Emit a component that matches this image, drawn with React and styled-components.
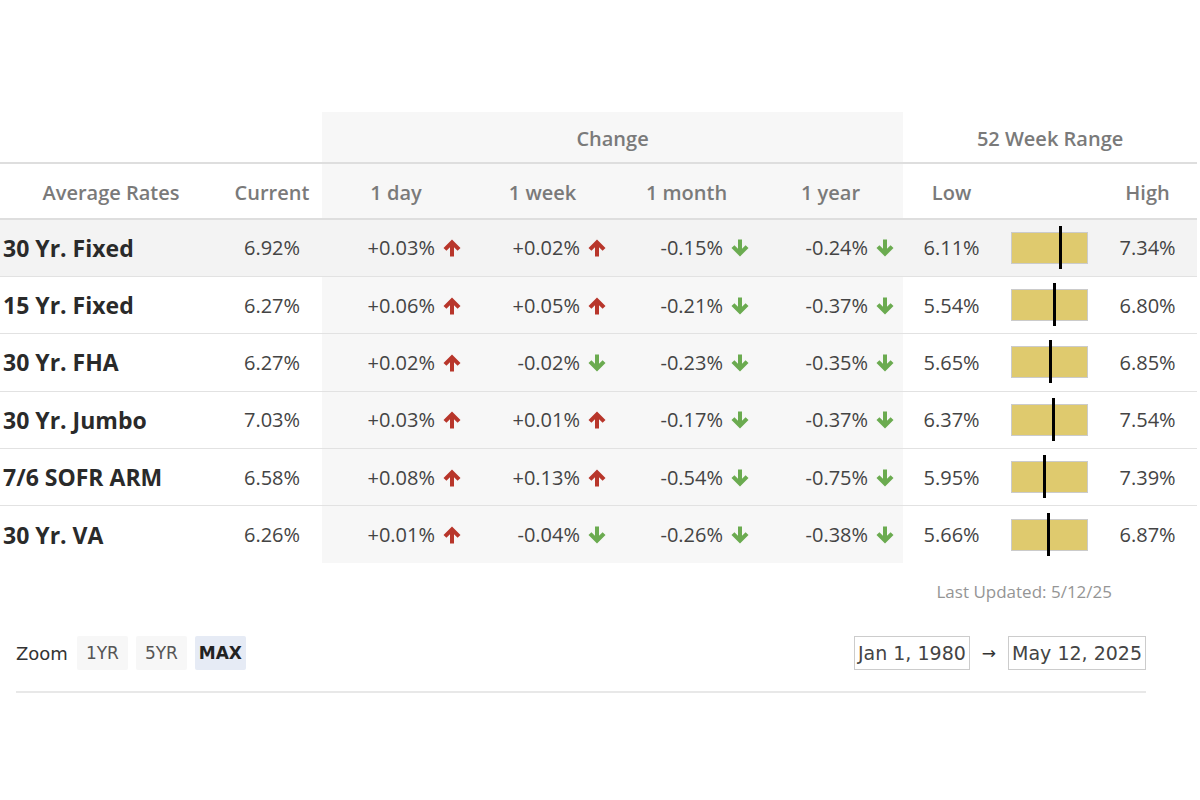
import React from 'react';
import styled, { createGlobalStyle } from 'styled-components';

const rates = [
  { name: '30 Yr. Fixed', current: 6.92, changes: [0.03, 0.02, -0.15, -0.24], low: 6.11, high: 7.34 },
  { name: '15 Yr. Fixed', current: 6.27, changes: [0.06, 0.05, -0.21, -0.37], low: 5.54, high: 6.8 },
  { name: '30 Yr. FHA', current: 6.27, changes: [0.02, -0.02, -0.23, -0.35], low: 5.65, high: 6.85 },
  { name: '30 Yr. Jumbo', current: 7.03, changes: [0.03, 0.01, -0.17, -0.37], low: 6.37, high: 7.54 },
  { name: '7/6 SOFR ARM', current: 6.58, changes: [0.08, 0.13, -0.54, -0.75], low: 5.95, high: 7.39 },
  { name: '30 Yr. VA', current: 6.26, changes: [0.01, -0.04, -0.26, -0.38], low: 5.66, high: 6.87 },
];

const periods = ['1 day', '1 week', '1 month', '1 year'];

const pct = (v) => `${v.toFixed(2)}%`;
const signed = (v) => `${v > 0 ? '+' : '-'}${Math.abs(v).toFixed(2)}%`;

const Arrow = ({ up }) => (
  <ArrowSvg viewBox="0 0 20 20" $up={up}>
    <path
      d="M10 1.5 L18.5 10 L15.6 12.8 L12 9.2 L12 18.5 L8 18.5 L8 9.2 L4.4 12.8 L1.5 10 Z"
      fill="currentColor"
    />
  </ArrowSvg>
);

const RangeBar = ({ low, high, current }) => {
  const pos = ((current - low) / (high - low)) * 100;
  return (
    <Bar>
      <Marker style={{ left: `${pos}%` }} />
    </Bar>
  );
};

const App = () => (
  <>
    <GlobalStyle />
    <Page>
      <Table>
        <colgroup>
          <col style={{ width: 222 }} />
          <col style={{ width: 100 }} />
          <col style={{ width: 148 }} />
          <col style={{ width: 145 }} />
          <col style={{ width: 143 }} />
          <col style={{ width: 145 }} />
          <col style={{ width: 97 }} />
          <col style={{ width: 98 }} />
          <col style={{ width: 99 }} />
        </colgroup>
        <thead>
          <GroupRow>
            <GroupCell colSpan={2} />
            <GroupCell colSpan={4} $shade>
              Change
            </GroupCell>
            <GroupCell colSpan={3}>52 Week Range</GroupCell>
          </GroupRow>
          <HeadRow>
            <HeadCell>Average Rates</HeadCell>
            <HeadCell>Current</HeadCell>
            {periods.map((p) => (
              <HeadCell key={p} $shade>
                {p}
              </HeadCell>
            ))}
            <HeadCell>Low</HeadCell>
            <HeadCell />
            <HeadCell>High</HeadCell>
          </HeadRow>
        </thead>
        <tbody>
          {rates.map((r, i) => (
            <Row key={r.name} $active={i === 0}>
              <NameCell>{r.name}</NameCell>
              <Cell>{pct(r.current)}</Cell>
              {r.changes.map((c, j) => (
                <ChangeCell key={j}>
                  {signed(c)}
                  <Arrow up={c > 0} />
                </ChangeCell>
              ))}
              <Cell>{pct(r.low)}</Cell>
              <Cell>
                <RangeBar low={r.low} high={r.high} current={r.current} />
              </Cell>
              <Cell>{pct(r.high)}</Cell>
            </Row>
          ))}
        </tbody>
      </Table>

      <Updated>Last Updated: 5/12/25</Updated>

      <Controls>
        <ZoomGroup>
          <ZoomLabel>Zoom</ZoomLabel>
          <ZoomButton>1YR</ZoomButton>
          <ZoomButton>5YR</ZoomButton>
          <ZoomButton $selected>MAX</ZoomButton>
        </ZoomGroup>
        <DateGroup>
          <DateBox>Jan 1, 1980</DateBox>
          <DateArrow>→</DateArrow>
          <DateBox>May 12, 2025</DateBox>
        </DateGroup>
      </Controls>
    </Page>
  </>
);

export default App;

const GlobalStyle = createGlobalStyle`
  body {
    margin: 0;
    background: #fff;
    font-family: "Open Sans", Lato, sans-serif;
  }
`;

const Page = styled.div`
  width: 1200px;
  padding-top: 112px;
`;

const Table = styled.table`
  width: 1197px;
  border-collapse: collapse;
  table-layout: fixed;
  color: #444;
`;

const GroupRow = styled.tr`
  height: 51px;
  border-bottom: 2px solid #dedede;
`;

const GroupCell = styled.th`
  padding: 3px 0 0;
  font-size: 20px;
  font-weight: 600;
  color: #7a7a7a;
  text-align: center;
  vertical-align: middle;
  background: ${(p) => (p.$shade ? '#f7f7f7' : 'transparent')};
`;

const HeadRow = styled.tr`
  height: 56px;
  border-bottom: 2px solid #dedede;
`;

const HeadCell = styled.th`
  padding: 3px 0 0;
  font-size: 20px;
  font-weight: 600;
  color: #7a7a7a;
  text-align: center;
  background: ${(p) => (p.$shade ? '#f7f7f7' : 'transparent')};
`;

const Row = styled.tr`
  height: 57.4px;
  border-bottom: 1px solid #e2e2e2;
  background: ${(p) => (p.$active ? '#f3f3f3' : 'transparent')};
  &:last-child {
    border-bottom: none;
  }
`;

const NameCell = styled.td`
  padding: 0 0 0 3px;
  font-size: 23px;
  font-weight: 700;
  color: #2a2a2a;
  text-align: left;
  white-space: nowrap;
`;

const Cell = styled.td`
  padding: 0;
  font-size: 20px;
  text-align: center;
`;

const ChangeCell = styled.td`
  padding: 0 8px 0 0;
  font-size: 20px;
  text-align: right;
  background: #f7f7f7;
  white-space: nowrap;
  tr:first-child > & {
    background: #f3f3f3;
  }
`;

const ArrowSvg = styled.svg`
  width: 20px;
  height: 20px;
  margin-left: 7px;
  vertical-align: -3px;
  color: ${(p) => (p.$up ? '#b8362b' : '#6bab50')};
  transform: ${(p) => (p.$up ? 'none' : 'rotate(180deg)')};
`;

const Bar = styled.div`
  position: relative;
  width: 75px;
  height: 30px;
  margin: 0 auto;
  background: #dfca6e;
  border: 1px solid #cbcbcb;
`;

const Marker = styled.div`
  position: absolute;
  top: -7px;
  width: 3px;
  height: 43px;
  margin-left: -1.5px;
  background: #000;
`;

const Updated = styled.div`
  padding: 17px 88px 0 0;
  text-align: right;
  font-size: 17px;
  color: #959595;
`;

const Controls = styled.div`
  width: 1130px;
  margin: 33px 0 0 16px;
  padding-bottom: 21px;
  border-bottom: 2px solid #e8e8e8;
  display: flex;
  align-items: center;
  justify-content: space-between;
`;

const ZoomGroup = styled.div`
  display: flex;
  align-items: center;
  gap: 8px;
  font-family: "DejaVu Sans", sans-serif;
`;

const ZoomLabel = styled.span`
  font-size: 18px;
  color: #333;
  margin-right: 1px;
`;

const ZoomButton = styled.span`
  width: 51px;
  height: 34px;
  display: flex;
  align-items: center;
  justify-content: center;
  border-radius: 2px;
  font-size: 17px;
  font-weight: ${(p) => (p.$selected ? 700 : 400)};
  color: ${(p) => (p.$selected ? '#222' : '#555')};
  background: ${(p) => (p.$selected ? '#e6ebf5' : '#f7f7f7')};
`;

const DateGroup = styled.div`
  display: flex;
  align-items: center;
  font-family: "DejaVu Sans", sans-serif;
  color: #444;
`;

const DateBox = styled.div`
  height: 32px;
  padding: 0 3px;
  display: flex;
  align-items: center;
  border: 1px solid #ccc;
  font-size: 19px;
`;

const DateArrow = styled.span`
  margin: 0 12px;
  font-size: 17px;
  color: #333;
`;
